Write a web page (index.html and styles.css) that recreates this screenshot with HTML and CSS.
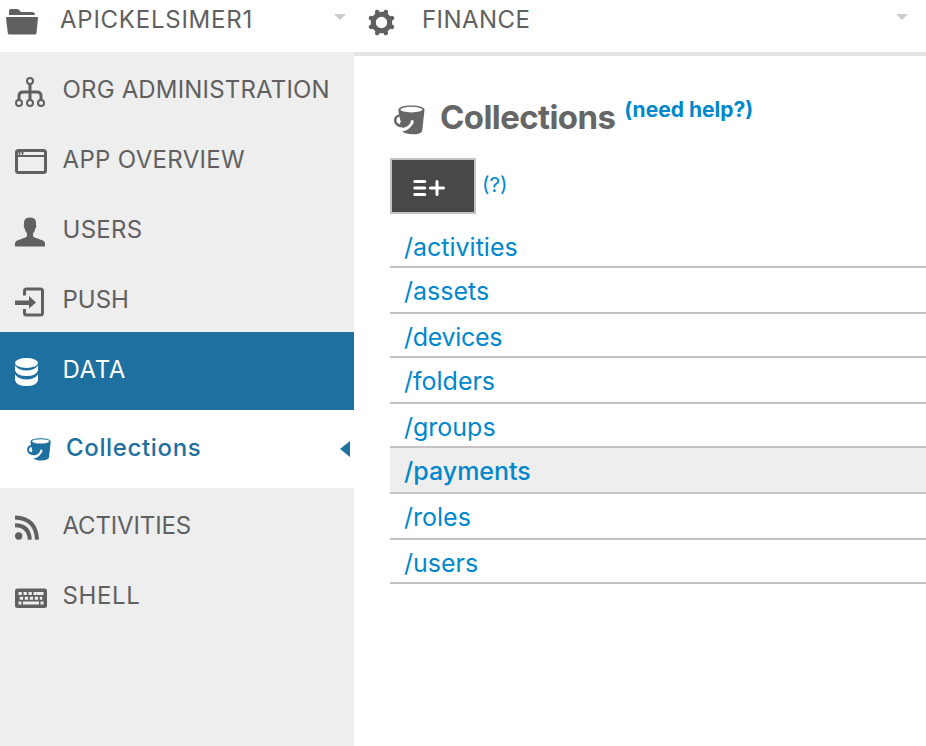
FILE: index.html
```html
<!DOCTYPE html>
<html lang="en">
<head>
<meta charset="utf-8">
<title>Collections</title>
<link rel="stylesheet" href="styles.css">
</head>
<body>
<svg class="defs" aria-hidden="true">
  <symbol id="bucket" viewBox="0 0 32 32">
    <path fill="currentColor" d="M4 6C4 0 31 0 31 6L28.500 28C26 32.500 12 32 8 28.500L7.500 24C3 24 -.5 21 -.5 17C-.5 13.500 1.500 11 4.500 11Z"/>
    <ellipse cx="17.500" cy="5.800" rx="11.500" ry="2.900" fill="#fff"/>
    <path fill="#fff" d="M5 13L6.600 18.500Q5.600 19 5.400 20.800Q2 19.800 2 17Q2 14 5 13Z"/>
    <path fill="#fff" d="M3 24.500Q13 25.500 16.500 19.500C16.200 17 18.700 15.500 19.700 17.500Q20.500 20 18.400 21.500Q15 27.500 8 28.500L3 28Z"/>
  </symbol>
</svg>
<header class="topbar">
  <div class="org">
    <svg class="folder" width="32" height="26" viewBox="0 0 32 26"><path fill="currentColor" d="M3 6V2Q3 0 5 0h6q2 0 3 2l1 1h11q3 0 3 3zM1 8h30q1 0 1 1l-1.500 15q-.2 1.500-2 1.500H3.500q-1.500 0-1.700-1.500L0 9q0-1 1-1z"/></svg>
    <span class="top-label org-name">APICKELSIMER1</span>
    <span class="caret"></span>
  </div>
  <div class="app">
    <svg class="gear" width="27" height="27" viewBox="-13.500 -13.500 27 27"><g fill="none" stroke="currentColor"><circle r="8.200" stroke-width="5"/><path stroke-width="4.600" stroke-linecap="round" d="M3.700-8.900L4.300-10.500M8.900-3.700L10.500-4.300M8.900 3.700L10.500 4.300M3.700 8.900L4.300 10.500M-3.700 8.900L-4.300 10.500M-8.900 3.700L-10.500 4.300M-8.900-3.700L-10.500-4.300M-3.700-8.900L-4.300-10.500"/></g></svg>
    <span class="top-label app-name">FINANCE</span>
    <span class="caret"></span>
  </div>
</header>
<div class="layout">
  <nav class="sidebar">
    <a class="item"><span class="icon"><svg width="31" height="31" viewBox="0 0 31 31"><g fill="none" stroke="currentColor" stroke-width="2"><circle cx="15" cy="4" r="3"/><circle cx="4" cy="26" r="3"/><circle cx="15" cy="26" r="3"/><circle cx="26" cy="26" r="3"/><path stroke-width="3" d="M15 7v16M4 23v-4q0-4 4-4h14q4 0 4 4v4"/></g></svg></span><span class="l-org">ORG ADMINISTRATION</span></a>
    <a class="item"><span class="icon raised"><svg width="32" height="31" viewBox="0 0 32 31"><path fill="none" stroke="currentColor" stroke-width="3" d="M3.500 4.500h25q2 0 2 2v18q0 2-2 2h-25q-2 0-2-2v-18q0-2 2-2z"/><path stroke="currentColor" stroke-width="2" d="M1 10h30"/><path stroke="currentColor" d="M4.500 5v4M7.500 5v4M2 7h7" /></svg></span><span class="l-app">APP OVERVIEW</span></a>
    <a class="item"><span class="icon raised"><svg width="31" height="31" viewBox="0 0 31 31"><path fill="currentColor" d="M15 1.500c5 0 6.500 3 6 7.500q1 2-.7 3.500-.3 3-2.300 5v2.500c1 2 4 2 7 3.500q5 1 5 4v3H0v-3q0-3 5-4c3-1.500 6-1.500 7-3.500v-2.500q-2-2-2.300-5Q8 11 9 9C8.500 4.500 10 1.500 15 1.500z"/></svg></span><span class="l-users">USERS</span></a>
    <a class="item"><span class="icon raised"><svg width="31" height="31" viewBox="0 0 31 31"><path fill="none" stroke="currentColor" stroke-width="3" d="M9.500 9.500V5q0-2 2-2h14q2 0 2 2v22q0 2-2 2h-14q-2 0-2-2v-4"/><path fill="currentColor" d="M0 14.500h14v-4.500l7 6.500-7 6v-3.500H0z"/></svg></span><span class="l-push">PUSH</span></a>
    <a class="item active"><span class="icon"><svg width="23" height="31" viewBox="0 0 23 31"><g fill="currentColor"><ellipse cx="11.500" cy="6" rx="11.500" ry="5"/><path d="M0 8.500q4 5 11.500 5T23 8.500v5q-2 5.500-11.500 5.500T0 13.500zM0 17.500q4 5 11.500 5T23 17.500v6q-2 5.500-11.500 5.500T0 23.500z"/></g></svg></span><span class="l-data">DATA</span></a>
    <a class="subitem"><svg class="sub-icon" width="25" height="24"><use href="#bucket"/></svg><span class="l-coll">Collections</span><i class="marker"></i></a>
    <a class="item"><span class="icon raised"><svg width="25" height="31" viewBox="0 0 25 31"><circle cx="3.700" cy="24" r="3.700" fill="currentColor"/><path fill="none" stroke="currentColor" stroke-width="4" d="M0 13.200q14 0 14.800 14.500M0 5.500Q21 6 22 27.700"/></svg></span><span class="l-act">ACTIVITIES</span></a>
    <a class="item"><span class="icon raised"><svg width="32" height="31" viewBox="0 0 32 31"><rect y="6.500" width="32" height="19.500" rx="2.500" fill="currentColor"/><path stroke="#eee" stroke-width="3" stroke-dasharray="3.300 1.700" d="M3.500 11.500h18.500M4.800 16.200h22.500"/><path stroke="#eee" stroke-width="3" d="M22 11.500h6.500M3.500 21h3M8 21h16M25.500 21h3"/></svg></span><span class="l-shell">SHELL</span></a>
  </nav>
  <main class="content">
    <h1 class="title"><svg class="title-icon" width="32" height="31"><use href="#bucket"/></svg><span class="title-text">Collections</span><a class="help">(need help?)</a></h1>
    <div class="toolbar">
      <button class="add" aria-label="Add collection"><svg width="32" height="18" viewBox="0 0 32 18"><path fill="none" stroke="currentColor" stroke-width="3" stroke-linecap="round" d="M1.800 2.500h10M1.800 9h10M1.800 15.500h10M17.500 9h13M24 2.500v13"/></svg></button>
      <a class="hint">(?)</a>
    </div>
    <ul class="collections">
      <li class="short"><a>/activities</a></li>
      <li><a>/assets</a></li>
      <li class="short"><a class="c-dev">/devices</a></li>
      <li><a>/folders</a></li>
      <li class="short"><a>/groups</a></li>
      <li class="selected"><a>/payments</a></li>
      <li><a>/roles</a></li>
      <li class="short"><a>/users</a></li>
    </ul>
  </main>
</div>
</body>
</html>
```
FILE: styles.css
```css
* { box-sizing: border-box; }
body { margin: 0; width: 926px; height: 746px; overflow: hidden; background: #fff; color: #606060; font-family: Inter, "Liberation Sans", sans-serif; font-size: 24px; }
.defs { position: absolute; width: 0; height: 0; }
svg { display: block; flex: none; overflow: visible; }
symbol { overflow: visible; }
span, a { white-space: nowrap; }
.topbar { display: flex; height: 52px; }
.org, .app { display: flex; align-items: flex-start; }
.org { width: 354px; padding-left: 6px; }
.app { flex: 1; padding-left: 13.5px; height: 56px; border-bottom: 4px solid #e5e5e5; }
.folder { margin-top: 9px; }
.gear { margin-top: 8.5px; }
.top-label { line-height: 40px; }
.org-name { margin-left: 22px; letter-spacing: .75px; }
.app-name { margin-left: 27.5px; letter-spacing: .45px; }
.caret { margin: 14px 8px 0 auto; border: 6px solid transparent; border-top-color: #ccc; border-bottom: 0; }
.app .caret { margin-right: 18px; }
.layout { display: flex; height: 694px; }
.sidebar { width: 354px; background: #eee; }
.item { display: flex; height: 70px; line-height: 76px; }
.icon { width: 62.5px; padding: 25px 0 0 15px; flex: none; }
.raised { padding-top: 24px; }
.active { height: 78px; background: #1d70a0; color: #fff; }
.l-org { letter-spacing: .17px; }
.l-app { letter-spacing: .33px; }
.l-users { letter-spacing: .3px; }
.l-data { letter-spacing: .6px; }
.l-act { letter-spacing: -.15px; }
.l-shell { letter-spacing: .6px; }
.subitem { display: flex; align-items: center; height: 78px; padding: 0 4px 2px 27px; background: #fff; color: #1d70a0; font-weight: 500; }
.sub-icon { margin-right: 14px; margin-top: 2px; }
.l-coll { letter-spacing: .65px; margin-top: -2px; }
.marker { margin-left: auto; margin-top: 2px; border: 8px solid transparent; border-left: 0; border-right: 10px solid #1d70a0; }
.content { flex: 1; padding: 42px 0 0 36px; }
.title { display: flex; margin: 0; height: 64px; padding-left: 4px; color: #666; font-size: 33px; line-height: 46px; letter-spacing: -.6px; }
.title-icon { margin: 10px 14px 0 0; }
.help { margin-left: 9px; font-size: 21px; line-height: 31px; letter-spacing: 0; color: #0088cc; }
.toolbar { display: flex; height: 66px; color: #0088cc; }
.add { display: flex; width: 86px; height: 56px; padding: 19px 0 0 20.5px; border: 2px solid #c3c3c3; background: #484848; color: #fff; }
.hint { margin-left: 6px; font-size: 20.5px; line-height: 54px; }
.collections { margin: 0; padding: 0; list-style: none; color: #0088cc; font-size: 25px; line-height: 46px; }
.collections li { height: 46px; padding-left: 14px; border-bottom: 2px solid #c3c3c3; }
.collections .short { height: 44px; }
.collections .selected { background: #eee; font-weight: 500; }
.c-dev { letter-spacing: -.3px; }
```
